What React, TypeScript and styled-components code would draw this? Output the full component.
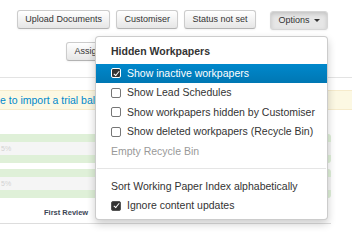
import styled, { createGlobalStyle, css } from "styled-components"

const Global = createGlobalStyle`
    html, body {
        margin: 0;
        padding: 0;
        background: #fff;
    }
    body {
        font-family: "Liberation Sans", Arial, sans-serif;
        color: #333;
    }
`

export default function App() {
    return <Page>
        <Global />
        <Toolbar>
            <BtnGroup>
                <Btn>Upload Documents</Btn>
                <Btn>Customiser</Btn>
                <Btn>Status not set</Btn>
            </BtnGroup>
            <Dropdown>
                <Btn active>Options <Caret /></Btn>
                <Menu>
                    <MenuHeader>Hidden Workpapers</MenuHeader>
                    <MenuItem active><Check checked light />Show inactive workpapers</MenuItem>
                    <MenuItem><Check />Show Lead Schedules</MenuItem>
                    <MenuItem><Check />Show workpapers hidden by Customiser</MenuItem>
                    <MenuItem><Check />Show deleted workpapers (Recycle Bin)</MenuItem>
                    <MenuItem disabled>Empty Recycle Bin</MenuItem>
                    <Divider />
                    <MenuItem>Sort Working Paper Index alphabetically</MenuItem>
                    <MenuItem><Check checked />Ignore content updates</MenuItem>
                </Menu>
            </Dropdown>
        </Toolbar>
        <SubToolbar>
            <Btn>Assign Reviewers</Btn>
        </SubToolbar>
        <Alert>e to import a trial balance for this engagement</Alert>
        <Table>
            <RowGroup>
                <GreenBar />
                <GreyRow>5%</GreyRow>
                <GreenBar />
            </RowGroup>
            <RowGroup>
                <GreenBar />
                <GreyRow>5%</GreyRow>
                <GreenBar />
            </RowGroup>
        </Table>
        <Footer>
            <FooterLabel>First Review</FooterLabel>
        </Footer>
    </Page>
}

const Page = styled.div`
    width: 352px;
    height: 246px;
    overflow: hidden;
    position: relative;
`

const Toolbar = styled.div`
    display: flex;
    justify-content: flex-end;
    align-items: center;
    gap: 14px;
    padding: 9px 24px 0 0;
`

const BtnGroup = styled.div`
    display: flex;
    gap: 5.5px;
`

type BtnProps = { active?: boolean }

const Btn = styled.button<BtnProps>`
    box-sizing: border-box;
    height: 19px;
    padding: 0 7.5px;
    display: inline-flex;
    align-items: center;
    gap: 4px;

    font-family: "Liberation Sans", Arial, sans-serif;
    font-size: 9px;
    color: #333;
    white-space: nowrap;

    border: 1px solid #ccc;
    border-bottom-color: #b3b3b3;
    border-radius: 3px;
    background: linear-gradient(#ffffff, #e6e6e6);
    box-shadow: inset 0 1px 0 rgba(255, 255, 255, 0.2), 0 1px 2px rgba(0, 0, 0, 0.05);

    ${props => props.active && css`
        background: #e6e6e6;
        border-color: #d6d6d6;
        box-shadow: inset 0 2px 4px rgba(0, 0, 0, 0.15), 0 1px 2px rgba(0, 0, 0, 0.05);
    `}
`

const Caret = styled.span`
    width: 0;
    height: 0;
    border-left: 3px solid transparent;
    border-right: 3px solid transparent;
    border-top: 3px solid #333;
    margin-top: 1px;
`

const Dropdown = styled.div`
    position: relative;
`

const Menu = styled.div`
    position: absolute;
    top: calc(100% + 6px);
    right: 0;
    z-index: 10;
    width: 233px;
    box-sizing: border-box;
    padding: 5px 0 3px;

    background: #fff;
    border: 1px solid rgba(0, 0, 0, 0.2);
    border-radius: 4px;
    box-shadow: 0 4px 9px rgba(0, 0, 0, 0.2);

    font-size: 10.5px;
    line-height: 19.5px;
`

const MenuHeader = styled.div`
    padding: 0 15px;
    margin-bottom: 2.5px;
    font-weight: 700;
    color: #333;
`

type MenuItemProps = { active?: boolean, disabled?: boolean }

const MenuItem = styled.div<MenuItemProps>`
    display: flex;
    align-items: center;
    gap: 6px;
    padding: 0 15px;
    color: #333;
    white-space: nowrap;

    ${props => props.active && css`
        color: #fff;
        background: linear-gradient(#0088cc, #0077b3);
    `}

    ${props => props.disabled && css`
        color: #999;
    `}
`

type CheckProps = { checked?: boolean, light?: boolean }

const Check = styled.span<CheckProps>`
    position: relative;
    box-sizing: border-box;
    width: 10px;
    height: 10px;
    flex: none;
    border-radius: 2px;
    border: 1px solid #767676;
    background: #fff;

    ${props => props.checked && css<CheckProps>`
        background: #333;
        border-color: ${props.light ? '#fff' : '#555'};

        &::after {
            content: "";
            position: absolute;
            left: 2.6px;
            top: 0.6px;
            width: 2.4px;
            height: 5px;
            border: solid #fff;
            border-width: 0 1.4px 1.4px 0;
            transform: rotate(40deg);
        }
    `}
`

const Divider = styled.div`
    height: 1px;
    margin: 7px 1px 7.5px;
    background: #e5e5e5;
`

const SubToolbar = styled.div`
    display: flex;
    padding: 12px 0 0 66px;
    padding-bottom: 16px;
    border-bottom: 1px solid #e3e3e3;
`

const Alert = styled.div`
    margin-top: 12px;
    height: 20px;
    box-sizing: border-box;
    display: flex;
    align-items: center;
    white-space: nowrap;

    background: #fcf8e3;
    border-top: 1px solid #f6ebcc;
    border-bottom: 1px solid #f6ebcc;
    color: #0088cc;
    font-size: 10.5px;
`

const Table = styled.div`
    margin-top: 24px;
    width: 331px;
    display: flex;
    flex-direction: column;
    gap: 6px;
`

const RowGroup = styled.div`
    display: flex;
    flex-direction: column;
    border-radius: 0 3px 3px 0;
    overflow: hidden;
`

const GreenBar = styled.div`
    height: 8px;
    background: #dff0d8;
`

const GreyRow = styled.div`
    height: 13px;
    padding-left: 1px;
    background: #f5f5f5;
    color: #d2d2d2;
    font-size: 7px;
    line-height: 13px;
`

const Footer = styled.div`
    margin-top: 5px;
    height: 20px;
    border-bottom: 1px solid #ddd;
    width: 331px;
    display: flex;
    align-items: center;
`

const FooterLabel = styled.div`
    margin-left: 44px;
    font-size: 7.5px;
    font-weight: 700;
    color: #3b4655;
`
